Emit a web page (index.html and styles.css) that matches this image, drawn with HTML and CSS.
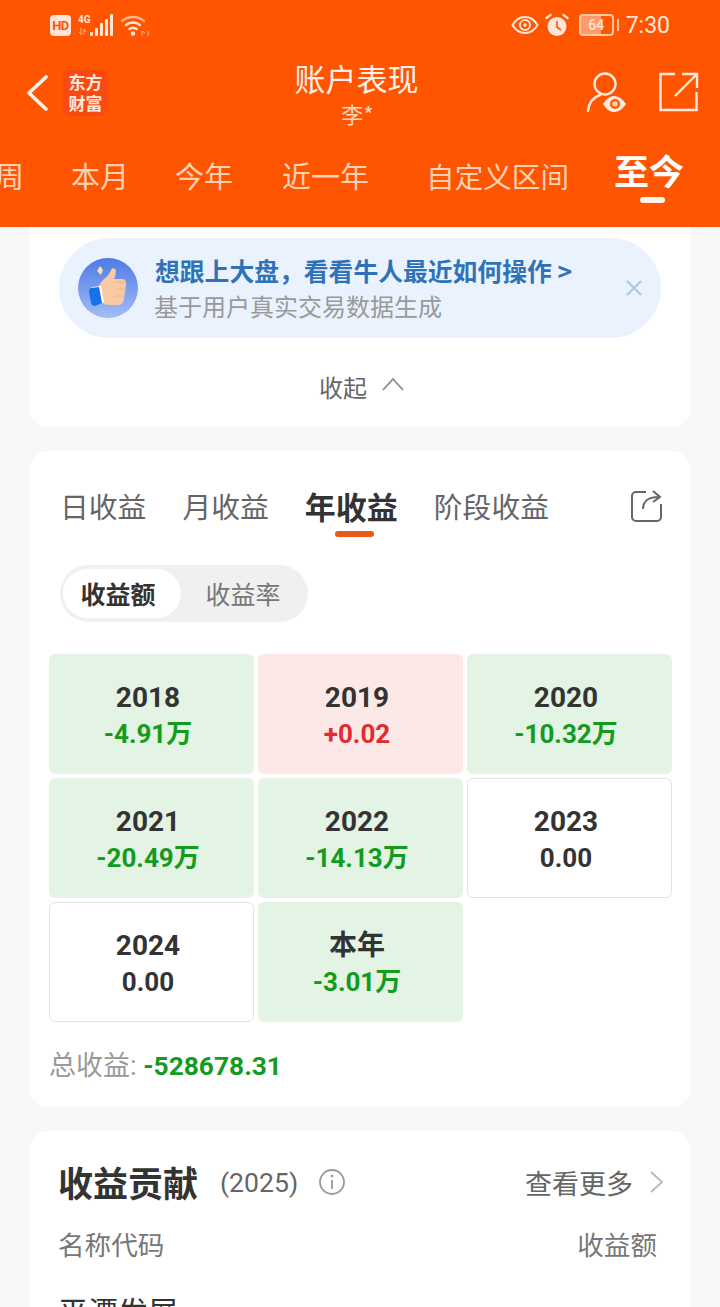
FILE: index.html
```html
<!DOCTYPE html>
<html lang="zh">
<head>
<meta charset="utf-8">
<title>账户表现</title>
<link rel="stylesheet" href="styles.css">
</head>
<body>
<div class="page">
  <header class="header">
    <div class="status">
      <div class="status-left">
        <span class="hd">HD</span>
        <svg class="sig" width="38" height="24" viewBox="0 0 38 24"><text x="0" y="10" class="net">4G</text><path d="M3 14v8M1 19l2 2M6 22v-6l2 3" stroke="#ffd9c2" stroke-width="1" fill="none" opacity=".7"/><g fill="#ffe6d8"><rect x="12" y="19" width="3" height="4" rx="1"/><rect x="17" y="15" width="3" height="8" rx="1"/><rect x="22" y="10" width="3" height="13" rx="1"/><rect x="27" y="6" width="3" height="17" rx="1"/><rect x="32" y="1" width="3" height="22" rx="1"/></g></svg>
        <svg class="wifi" width="30" height="24" viewBox="0 0 30 24"><g fill="none" stroke="#ffe6d8" stroke-width="2.400" stroke-linecap="round"><path d="M2 8a17 17 0 0 1 22 0" opacity=".65"/><path d="M6 12a11 11 0 0 1 14 0"/><path d="M9.500 16a6 6 0 0 1 7 0"/></g><circle cx="13" cy="20.500" r="2.200" fill="#ffe6d8"/><path d="M22 18v5M25 20l-3-2M28 18v5" stroke="#ffd9c2" stroke-width="1" fill="none" opacity=".7"/></svg>
      </div>
      <div class="status-right">
        <svg width="28" height="20" viewBox="0 0 28 20"><path d="M1.500 10C5 4 9 2 14 2s9 2 12.500 8C23 16 19 18 14 18S5 16 1.500 10z" fill="none" stroke="#ffe6d8" stroke-width="2"/><circle cx="14" cy="10" r="5" fill="none" stroke="#ffe6d8" stroke-width="2"/><circle cx="14" cy="10" r="1.800" fill="#ffe6d8"/></svg>
        <svg width="24" height="24" viewBox="0 0 24 24"><circle cx="12" cy="13.500" r="9.500" fill="#ffe6d8"/><path d="M12 8v6l4 3" fill="none" stroke="#ff5500" stroke-width="1.600"/><path d="M1.500 5l4-3M22.500 5l-4-3" stroke="#ffe6d8" stroke-width="2.200" stroke-linecap="round"/></svg>
        <span class="battery"><span class="battery-num">64</span></span>
        <span class="battery-tip"></span>
        <span class="clock">7:30</span>
      </div>
    </div>
    <div class="titlebar">
      <div class="tb-left">
        <svg class="back" width="24" height="36" viewBox="0 0 24 36"><path d="M21 2L4 18l17 16" fill="none" stroke="#fff3ea" stroke-width="3.600" stroke-linecap="round" stroke-linejoin="round"/></svg>
        <div class="logo"><div>东方</div><div>财富</div></div>
      </div>
      <div class="title">
        <div class="title-main">账户表现</div>
        <div class="title-sub">李*</div>
      </div>
      <div class="tb-right">
        <svg width="44" height="44" viewBox="0 0 44 44"><circle cx="19" cy="14" r="10.500" fill="none" stroke="#ffeadf" stroke-width="2.400"/><path d="M2 41c1-9 6-14 12-16" fill="none" stroke="#ffeadf" stroke-width="2.400" stroke-linecap="round"/><path d="M17 34c4-6 8-8 11-8s8 2 12 8c-4 6-8 8-12 8s-7-2-11-8z" fill="#ffeadf"/><circle cx="29" cy="34" r="5" fill="#ff5500"/><circle cx="29" cy="34" r="2.800" fill="#ffc9a8"/></svg>
        <svg width="40" height="40" viewBox="0 0 40 40"><path d="M16 2H1.500v36h36V20" fill="none" stroke="#ffeadf" stroke-width="2.400"/><path d="M37 3L16 24M23 2h15v14" fill="none" stroke="#ffeadf" stroke-width="2.400"/></svg>
      </div>
    </div>
    <nav class="tabs">
      <span class="tab tab-week">周</span>
      <span class="tab tab-month">本月</span>
      <span class="tab tab-year">今年</span>
      <span class="tab tab-12m">近一年</span>
      <span class="tab tab-custom">自定义区间</span>
      <span class="tab tab-active">至今</span>
    </nav>
  </header>

  <main class="content">
    <section class="card card-top">
      <div class="promo">
        <svg class="thumb" width="60" height="60" viewBox="0 0 60 60">
          <defs><linearGradient id="bg" x1="0" y1="0" x2="0" y2="1"><stop offset="0" stop-color="#4f7ae6"/><stop offset="1" stop-color="#a3bdf8"/></linearGradient></defs>
          <circle cx="30" cy="30" r="30" fill="url(#bg)"/>
          <path d="M26 21c3-2 6-6 7-9 1-3 5-2 5 1 0 3-1 6-2 8h8c3 0 5 3 4 6l-2 14c-1 4-3 6-6 6H32c-4 0-7-1-9-3l-2-17c2-2 3-4 5-6z" fill="#f8c9a3"/>
          <path d="M38 24c3 0 8 0 10 1M38 31h10M37 38h9" stroke="#eeb48a" stroke-width="1" fill="none"/>
          <path d="M15 29l8-1 3 16-8 3c-3 1-5 0-5-3l-1-11c0-2 1-4 3-4z" fill="#fff"/>
          <path d="M13 30l8-1 3 16-7 3c-2 0-4-1-4-3l-2-11c0-2 0-3 2-4z" fill="#1672e6"/>
          <path d="M22 8l3 4-2 5-4-4z" fill="#f7e3a8"/>
        </svg>
        <div class="promo-text">
          <div class="promo-title">想跟上大盘，看看牛人最近如何操作 &gt;</div>
          <div class="promo-sub">基于用户真实交易数据生成</div>
        </div>
        <svg class="close" width="18" height="18" viewBox="0 0 18 18"><path d="M2 2l14 14M16 2L2 16" stroke="#a9c4e4" stroke-width="1.800" fill="none"/></svg>
      </div>
      <div class="collapse">
        <span>收起</span>
        <svg width="24" height="14" viewBox="0 0 24 14"><path d="M2 13L12 2l10 11" fill="none" stroke="#888" stroke-width="1.800"/></svg>
      </div>
    </section>

    <section class="card card-profit">
      <div class="ptabs">
        <span class="ptab">日收益</span>
        <span class="ptab">月收益</span>
        <span class="ptab ptab-active">年收益</span>
        <span class="ptab">阶段收益</span>
        <svg class="pshare" width="32" height="34" viewBox="0 0 32 34"><path d="M16 4H6a4 4 0 0 0-4 4v21a4 4 0 0 0 4 4h21a4 4 0 0 0 4-4V16" fill="none" stroke="#666" stroke-width="2" transform="translate(0 -1)"/><path d="M13 20c0-7 5-12 15-12M23 2l7 6-7 5" fill="none" stroke="#666" stroke-width="2"/></svg>
      </div>
      <div class="seg">
        <span class="seg-item seg-on">收益额</span>
        <span class="seg-item seg-off">收益率</span>
      </div>
      <div class="grid">
        <div class="cell cell-g"><b>2018</b><i>-4.91万</i></div>
        <div class="cell cell-r"><b>2019</b><i>+0.02</i></div>
        <div class="cell cell-g"><b>2020</b><i>-10.32万</i></div>
        <div class="cell cell-g"><b>2021</b><i>-20.49万</i></div>
        <div class="cell cell-g"><b>2022</b><i>-14.13万</i></div>
        <div class="cell cell-n"><b>2023</b><i>0.00</i></div>
        <div class="cell cell-n"><b>2024</b><i>0.00</i></div>
        <div class="cell cell-g"><b>本年</b><i>-3.01万</i></div>
      </div>
      <div class="total">总收益: <b>-528678.31</b></div>
    </section>

    <section class="card card-contrib">
      <div class="c-head">
        <span class="c-title">收益贡献</span>
        <span class="c-year">(2025)</span>
        <svg class="c-info" width="28" height="28" viewBox="0 0 28 28"><circle cx="14" cy="14" r="12" fill="none" stroke="#999" stroke-width="1.800"/><path d="M14 12v9" stroke="#999" stroke-width="1.800"/><circle cx="14" cy="8" r="1.300" fill="#999"/></svg>
        <span class="c-more">查看更多</span>
        <svg width="16" height="24" viewBox="0 0 16 24"><path d="M2 2l11 10L2 22" fill="none" stroke="#bbb" stroke-width="2"/></svg>
      </div>
      <div class="c-cols"><span>名称代码</span><span>收益额</span></div>
      <div class="c-row">平潭发展</div>
    </section>
  </main>
</div>
</body>
</html>
```

FILE: styles.css
```css
* { box-sizing: border-box; }
html, body { margin: 0; padding: 0; }
body {
  width: 720px;
  height: 1307px;
  overflow: hidden;
  background: #f6f7f9;
  font-family: "Roboto", "Noto Sans CJK SC", sans-serif;
  color: #333;
}
.page { width: 720px; height: 1307px; overflow: hidden; }

.header { height: 227px; background: #ff5500; color: #fff; overflow: hidden; }
.status { height: 50px; display: flex; justify-content: space-between; align-items: center; padding: 0 50px 0 50px; }
.status-left, .status-right { display: flex; align-items: center; }
.status-right { gap: 6px; }
.hd { width: 21px; height: 21px; border-radius: 4px; background: #ffe6d8; color: #ff5500; font-size: 13px; font-weight: 700; line-height: 21px; text-align: center; letter-spacing: -.5px; margin-right: 7px; }
.sig { margin-right: 4px; }
.net { font-size: 10px; font-weight: 700; fill: #ffe6d8; font-family: "Roboto", sans-serif; }
.battery { width: 35px; height: 22px; border: 2px solid #ffc9a8; border-radius: 4px; display: flex; align-items: center; justify-content: center; background: linear-gradient(90deg, #ff9a6a 64%, transparent 64%); margin-left: 4px; }
.battery-num { font-size: 14px; font-weight: 500; color: #ffe6d8; }
.battery-tip { width: 2px; height: 12px; background: #ffc9a8; margin-left: -3px; }
.clock { font-size: 23px; color: #ffe6d8; margin-left: 1px; }

.titlebar { height: 88px; display: flex; align-items: center; justify-content: space-between; position: relative; padding: 0 21px 4px 25px; }
.tb-left { display: flex; align-items: center; gap: 14px; }
.back { position: relative; top: 1px; }
.logo { width: 45px; height: 47px; border-radius: 8px; background: #f84a12; color: #ffe9dc; font-size: 17px; line-height: 21px; font-weight: 700; text-align: center; padding-top: 2px; font-family: "Noto Sans CJK SC", sans-serif; }
.title { position: absolute; left: 0; right: 7px; top: 7px; text-align: center; font-family: "Noto Sans CJK SC", sans-serif; }
.title-main { font-size: 31px; line-height: 42px; color: #fff0e6; }
.title-sub { font-size: 22px; line-height: 28px; color: #ffd9c2; padding-left: 2px; }
.tb-right { display: flex; align-items: center; gap: 29px; }

.tabs { display: flex; align-items: baseline; margin-left: -5px; margin-top: 15px; font-family: "Noto Sans CJK SC", sans-serif; position: relative; }
.tab { font-size: 29px; line-height: 40px; color: #ffd2b8; white-space: nowrap; }
.tab-month { margin-left: 47px; }
.tab-year { margin-left: 46px; }
.tab-12m { margin-left: 49px; }
.tab-custom { margin-left: 57px; font-size: 28.6px; }
.tab-active { margin-left: 45px; font-size: 35px; font-weight: 700; color: #fff; position: relative; line-height: 40px; top: -3px; }
.tab-active::after { content: ""; position: absolute; left: 26px; top: 47px; width: 25px; height: 6px; border-radius: 3px; background: #fff3ea; }

.content { padding: 0 29px; display: flex; flex-direction: column; gap: 24px; }
.card { background: #fff; border-radius: 20px; }
.card-top { height: 200px; border-radius: 0 0 20px 20px; padding: 11px 30px 0; }
.promo { height: 100px; border-radius: 50px; background: #eaf2fd; display: flex; align-items: center; padding: 0 19px; position: relative; }
.thumb { flex: none; margin-right: 17px; }
.promo-text { font-family: "Noto Sans CJK SC", sans-serif; white-space: nowrap; }
.promo-title { font-size: 24.8px; line-height: 36px; font-weight: 700; color: #2f72b8; }
.promo-sub { font-size: 24px; line-height: 36px; color: #999; margin-left: -1px; }
.close { position: absolute; right: 18px; top: 41px; }
.collapse { display: flex; justify-content: center; align-items: center; gap: 14px; margin-top: 32px; padding-left: 4px; font-size: 24px; line-height: 34px; color: #666; font-family: "Noto Sans CJK SC", sans-serif; }
.collapse svg { margin-top: -6px; }

.card-profit { height: 656px; padding: 0 19px 0 20px; }
.ptabs { height: 80px; padding: 35px 0 0 11px; position: relative; display: flex; gap: 36px; font-family: "Noto Sans CJK SC", sans-serif; }
.ptab { font-size: 28.8px; line-height: 40px; color: #666; white-space: nowrap; }
.ptab-active { font-size: 31px; font-weight: 700; color: #333; position: relative; }
.ptab-active::after { content: ""; position: absolute; left: 30px; top: 45px; width: 39px; height: 6px; border-radius: 3px; background: #e8591a; }
.pshare { position: absolute; left: 581px; top: 38px; }
.seg { width: 248px; height: 57px; margin: 34px 0 0 11px; border-radius: 29px; background: #f0f0f0; display: flex; align-items: center; padding: 0 0 0 3px; font-family: "Noto Sans CJK SC", sans-serif; }
.seg-item { height: 49px; line-height: 49px; text-align: center; font-size: 25px; color: #777; border-radius: 25px; flex: none; }
.seg-on { width: 118px; padding-right: 8px; background: #fff; color: #333; font-weight: 700; }
.seg-off { width: 124px; }
.grid { display: grid; grid-template-columns: 205px 205px 205px; grid-auto-rows: 120px; gap: 4px; margin-top: 32px; }
.cell { border-radius: 6px; display: flex; flex-direction: column; align-items: center; padding: 26px 7px 0 0; }
.cell b { font-size: 28px; line-height: 36px; font-weight: 700; color: #333; }
.cell i { font-style: normal; font-size: 26px; line-height: 37px; font-weight: 700; }
.cell-g { background: #e3f3e4; }
.cell-g i { color: #149b1e; }
.cell-r { background: #fde8e8; }
.cell-r i { color: #e02b30; }
.cell-n { background: #fff; border: 1px solid #e3e3e3; padding-top: 25px; }
.cell-n i { color: #333; }
.total { margin-top: 26px; font-size: 27px; line-height: 36px; color: #999; }
.total b { color: #149b1e; font-weight: 700; font-size: 26.3px; }

.card-contrib { height: 230px; padding: 0 26px 0 29px; overflow: hidden; }
.c-head { display: flex; align-items: center; padding-top: 26px; height: 76px; }
.c-title { font-size: 35px; font-weight: 700; color: #333; font-family: "Noto Sans CJK SC", sans-serif; line-height: 50px; }
.c-year { font-size: 26.6px; color: #666; margin-left: 22px; }
.c-info { margin-left: 20px; }
.c-more { font-size: 27px; color: #666; margin-left: auto; margin-right: 16px; font-family: "Noto Sans CJK SC", sans-serif; }
.c-cols { display: flex; justify-content: space-between; font-size: 26.6px; line-height: 38px; color: #777; padding-right: 8px; margin-top: 18px; font-family: "Noto Sans CJK SC", sans-serif; }
.c-row { font-size: 30px; line-height: 40px; color: #333; margin-top: 27px; font-family: "Noto Sans CJK SC", sans-serif; }
```
